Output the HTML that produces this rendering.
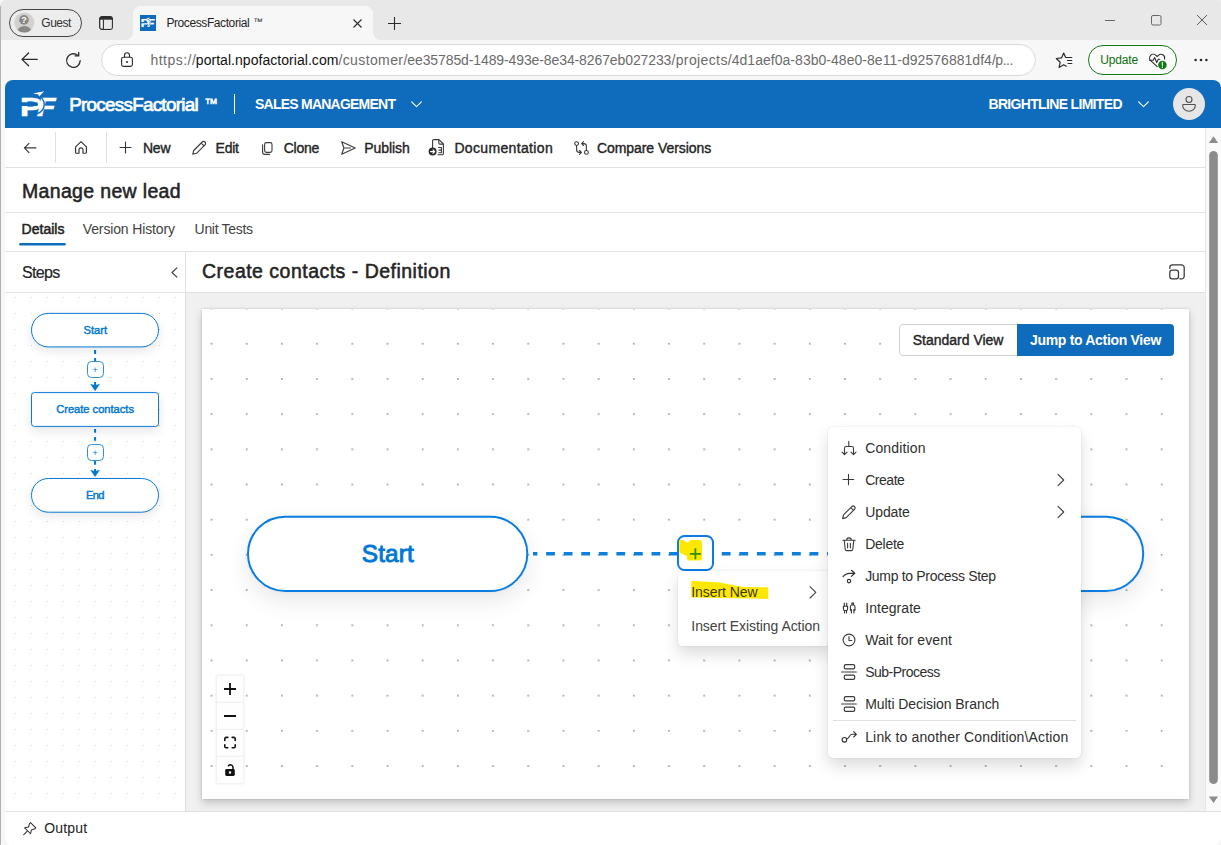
<!DOCTYPE html>
<html lang="en">
<head>
<meta charset="utf-8">
<title>ProcessFactorial ™</title>
<style>
html,body{margin:0;padding:0;}
body{width:1221px;height:845px;overflow:hidden;position:relative;background:#f7f7f7;font-family:"Liberation Sans",sans-serif;}
.a{position:absolute;box-sizing:border-box;}
.t{position:absolute;white-space:pre;line-height:1;font-family:"Liberation Sans",sans-serif;}
svg{position:absolute;overflow:visible;}
.ic{fill:none;stroke:#3a3a3a;stroke-width:1.100;stroke-linecap:round;stroke-linejoin:round;}
.hl{background:#e0e0e0;}
</style>
</head>
<body>
<!-- ===== window chrome ===== -->
<div class="a" id="titlebar" style="left:0;top:0;width:1221px;height:40px;background:#e8e8e8;border-radius:6px 2px 0 0;"></div>
<div class="a" id="wborder" style="left:0;top:6px;width:1px;height:839px;background:#b2b2b2;"></div>
<!-- guest pill -->
<div class="a" style="left:9px;top:9px;width:73px;height:28px;border:1px solid #444;border-radius:14px;background:#ececec;"></div>
<svg style="left:14px;top:12px" width="21" height="21" viewBox="0 0 21 21"><defs><clipPath id="gc"><circle cx="10.3" cy="10.600" r="10"/></clipPath></defs><circle cx="10.3" cy="10.600" r="10" fill="#d3d1cf"/><g clip-path="url(#gc)"><ellipse cx="10.3" cy="20.600" rx="7.600" ry="6.600" fill="#8a8886"/></g><circle cx="10" cy="7.900" r="4.800" fill="#8a8886"/></svg>
<span class="t" style="left:21.300px;top:15.600px;font-size:9px;font-weight:700;color:#fff;">?</span>
<!-- vertical tabs icon -->
<svg style="left:99px;top:16px" width="14" height="14" viewBox="0 0 14 14"><rect x=".7" y=".7" width="12.600" height="12.600" rx="2.300" fill="#f4f4f4" stroke="#2e2e2e" stroke-width="1.300"/><path d="M.7 3.400V3A2.300 2.300 0 0 1 3 .7h8A2.300 2.300 0 0 1 13.300 3v.4z" fill="#2e2e2e" stroke="#2e2e2e" stroke-width=".6"/><path d="M4.400 3.400v9.800" stroke="#2e2e2e" stroke-width="1.100"/><rect x="5" y="3.900" width="7.600" height="8.700" fill="#e8e8e8"/></svg>
<!-- active tab -->
<div class="a" style="left:133px;top:6px;width:240px;height:34px;background:#f7f7f7;border-radius:8px 8px 0 0;"></div>
<svg style="left:125px;top:32px" width="8" height="8" viewBox="0 0 8 8"><path d="M8 0v8H0a8 8 0 0 0 8-8z" fill="#f7f7f7"/></svg>
<svg style="left:373px;top:32px" width="8" height="8" viewBox="0 0 8 8"><path d="M0 0v8h8a8 8 0 0 1-8-8z" fill="#f7f7f7"/></svg>
<!-- favicon -->
<div class="a" style="left:140px;top:15px;width:16px;height:16px;background:#0f6cbd;"></div>
<div class="a" style="left:0;top:0;width:70px;height:125px;transform-origin:0 0;transform:translate(132.900px,-17.800px) scale(.388);">
<span class="t" style="left:20.200px;top:93.900px;font-size:26px;font-weight:700;color:#fff;transform-origin:0 0;transform:scaleX(1.26);-webkit-text-stroke:.6px #fff;">P</span>
<span class="t" style="left:36.800px;top:93.900px;font-size:26px;font-weight:700;font-style:italic;color:#fff;transform-origin:0 0;transform:scaleX(1.16);-webkit-text-stroke:.6px #fff;">F</span>
<svg style="left:0;top:0" width="70" height="125"><path d="M20 102.300h16.200a1.850 1.850 0 0 1 0 3.700H20z" fill="#0f6cbd"/><path d="M40.300 96.500c3.600 2.600 4.800 7.500 3.300 11.400-1.200 3-3.600 4.600-6.400 5.800" fill="none" stroke="#0f6cbd" stroke-width="1.400"/><path d="M33 93.500L44.100 91.300 39.200 96.400 38.400 94.500z" fill="#fff"/></svg>
</div>
<!-- tab close, new tab -->
<svg style="left:352.5px;top:19.1px" width="9" height="9" viewBox="0 0 9 9"><path d="M.5.5l8 8M8.5.5l-8 8" stroke="#2b2b2b" stroke-width="1.1" fill="none"/></svg>
<svg style="left:387.5px;top:16.5px" width="13" height="13" viewBox="0 0 13 13"><path d="M6.5 0v13M0 6.5h13" stroke="#2b2b2b" stroke-width="1.1" fill="none"/></svg>
<!-- window controls -->
<svg style="left:1104px;top:19.5px" width="11" height="1" viewBox="0 0 11 1"><path d="M1 .5h10" stroke="#666" stroke-width="1"/></svg>
<svg style="left:1151px;top:15px" width="11" height="11" viewBox="0 0 11 11"><rect x=".5" y=".5" width="9.500" height="9.500" rx="1.500" fill="none" stroke="#666" stroke-width="1"/></svg>
<svg style="left:1197px;top:15px" width="10" height="10" viewBox="0 0 10 10"><path d="M0 0l10 10M10 0L0 10" stroke="#5a5a5a" stroke-width="1" fill="none"/></svg>
<!-- toolbar row -->
<svg style="left:21px;top:52px" width="17" height="15" viewBox="0 0 17 15"><path d="M7.6 1L1 7.4l6.6 6.4M1.2 7.4h15" fill="none" stroke="#2b2b2b" stroke-width="1.3" stroke-linecap="round" stroke-linejoin="round"/></svg>
<svg style="left:64.5px;top:51.5px" width="17" height="17" viewBox="0 0 17 17"><path d="M15.2 8.6A6.8 6.8 0 1 1 12.6 3.2" fill="none" stroke="#2b2b2b" stroke-width="1.3" stroke-linecap="round"/><path d="M10.2 3.9h3.5V.5" fill="none" stroke="#2b2b2b" stroke-width="1.3" stroke-linecap="round" stroke-linejoin="round"/></svg>
<div class="a" style="left:101px;top:44px;width:934.500px;height:32px;border-radius:16px;background:#fff;border:1px solid #dadada;"></div>
<svg style="left:121px;top:52px" width="12" height="15" viewBox="0 0 12 15"><rect x=".6" y="5.3" width="10.8" height="9.1" rx="1.8" fill="none" stroke="#2b2b2b" stroke-width="1.1"/><path d="M3.500 5.300V3.300a2.500 2.500 0 0 1 5 0v2" fill="none" stroke="#2b2b2b" stroke-width="1.100"/><circle cx="6" cy="9.9" r="1" fill="#2b2b2b"/></svg>
<!-- favorites -->
<svg style="left:0;top:0" width="1221" height="80"><g fill="none" stroke="#2b2b2b" stroke-width="1.200" stroke-linecap="round" stroke-linejoin="round"><path d="M1065.500 57.300L1063.700 53l-2.200 4.900-5.200.6 3.900 3.700-1.100 5.200 4.600-2.700 2.600 1.500"/><path d="M1066.200 57.500h5.600M1067.400 60.500h4.400M1068 63.500h3.800"/></g></svg>
<!-- update pill -->
<div class="a" style="left:1087.5px;top:45px;width:89.5px;height:30px;border:1px solid #107c10;border-radius:15px;background:#fbfbfb;"></div>
<svg style="left:1149px;top:52.5px" width="18" height="16" viewBox="0 0 18 16"><path d="M8.2 13.6L1.700 7.600A3.700 3.700 0 0 1 7 2.300l1.200 1.200 1.200-1.200A3.700 3.700 0 0 1 15.500 6" fill="none" stroke="#2b2b2b" stroke-width="1.1" stroke-linecap="round" stroke-linejoin="round"/><path d="M.5 7.200h3.800l1.400-2.600 2 5 1.500-3.400h1.600" fill="none" stroke="#2b2b2b" stroke-width="1.1" stroke-linecap="round" stroke-linejoin="round"/><circle cx="13.400" cy="12" r="4.300" fill="#107c10"/><path d="M13.400 9.500v2.800" stroke="#fff" stroke-width="1.300" stroke-linecap="round"/><circle cx="13.400" cy="14.200" r=".75" fill="#fff"/></svg>
<svg style="left:1194px;top:58px" width="14" height="4" viewBox="0 0 14 4"><circle cx="1.600" cy="2" r="1.300" fill="#2b2b2b"/><circle cx="7" cy="2" r="1.300" fill="#2b2b2b"/><circle cx="12.400" cy="2" r="1.300" fill="#2b2b2b"/></svg>

<!-- ===== page ===== -->
<div class="a" id="page" style="left:5px;top:80px;width:1216px;height:766px;background:#fff;border-radius:8px 8px 9px 9px;overflow:hidden;">
  <div class="a" style="left:0;top:0;width:1216px;height:48px;background:#0f6cbd;"></div>
</div>
<!-- logo -->
<span class="t" id="lgP" style="left:20.200px;top:93.900px;font-size:26px;font-weight:700;color:#fff;transform-origin:0 0;transform:scaleX(1.26);-webkit-text-stroke:.6px #fff;">P</span>
<span class="t" id="lgF" style="left:36.800px;top:93.900px;font-size:26px;font-weight:700;font-style:italic;color:#fff;transform-origin:0 0;transform:scaleX(1.16);-webkit-text-stroke:.6px #fff;">F</span>
<svg style="left:0;top:0" width="70" height="125"><path d="M20 102.300h16.200a1.850 1.850 0 0 1 0 3.700H20z" fill="#0f6cbd"/><path d="M40.300 96.500c3.600 2.600 4.800 7.500 3.300 11.400-1.200 3-3.600 4.600-6.400 5.800" fill="none" stroke="#0f6cbd" stroke-width="1.400"/><path d="M33 93.500L44.100 91.300 39.200 96.400 38.400 94.500z" fill="#fff"/></svg>
<div class="a" style="left:234px;top:94px;width:1px;height:20px;background:#fff;"></div>
<svg style="left:411px;top:101px" width="11" height="7" viewBox="0 0 11 7"><path d="M.6.800l4.900 4.900L10.400.800" fill="none" stroke="#fff" stroke-width="1.100" stroke-linecap="round" stroke-linejoin="round"/></svg>
<svg style="left:1137.500px;top:101px" width="11" height="7" viewBox="0 0 11 7"><path d="M.6.800l4.900 4.900L10.400.800" fill="none" stroke="#fff" stroke-width="1.100" stroke-linecap="round" stroke-linejoin="round"/></svg>
<div class="a" style="left:1173px;top:88px;width:32px;height:32px;border-radius:16px;background:#e6e6e6;"></div>
<svg style="left:0;top:0" width="1221" height="128"><g fill="none" stroke="#505050" stroke-width="1.100"><circle cx="1189" cy="99.500" r="3"/><path d="M1183.300 104.500h11.400a.6.600 0 0 1 .6.600v.5a6.300 5.600 0 0 1-12.600 0v-.5a.6.600 0 0 1 .6-.6z"/></g></svg>

<!-- command bar -->
<div class="a" style="left:5px;top:167px;width:1200px;height:1px;background:#e0e0e0;"></div>
<div class="a" style="left:55px;top:132px;width:1px;height:31px;background:#e0e0e0;"></div>
<div class="a" style="left:106px;top:132px;width:1px;height:31px;background:#e0e0e0;"></div>
<svg class="ic" style="left:0;top:0" width="60" height="170"><path d="M29 143.300l-4.600 4.600 4.600 4.700M24.700 147.900h11.200" stroke-width="1.150"/></svg>
<svg class="ic" style="left:75px;top:140.900px" width="12" height="13" viewBox="0 0 12 13"><path d="M.6 5.800L6 .7l5.400 5.100v5.600a.8.800 0 0 1-.8.800H8V8.800a2 2 0 0 0-4 0v3.400H1.400a.8.800 0 0 1-.8-.8z" stroke="#333" stroke-width="1.150"/></svg>
<svg class="ic" style="left:0;top:0" width="140" height="170"><path d="M125.500 142v11M120 147.500h11" stroke="#333"/></svg>
<svg class="ic" style="left:191.500px;top:141px" width="15" height="14" viewBox="0 0 15 14"><path d="M.8 13.200l.9-3.700L10.200 1a1.900 1.900 0 0 1 2.800 2.800L4.500 12.300zM9.200 2l2.800 2.800"/></svg>
<svg class="ic" style="left:261.500px;top:141.500px" width="11" height="13" viewBox="0 0 11 13"><rect x="2.600" y=".6" width="7.400" height="9.800" rx="1.800"/><path d="M.6 2.800v7.400a2.200 2.200 0 0 0 2.200 2.200h4.700"/></svg>
<svg class="ic" style="left:341px;top:141px" width="15" height="14" viewBox="0 0 15 14"><path d="M.7.800l13.500 6.200L.7 13.200 2.900 7zM2.900 7h6.600"/></svg>
<svg class="ic" style="left:428px;top:139px" width="17" height="17" viewBox="0 0 17 17"><path d="M4.600 9V1.900a1.300 1.300 0 0 1 1.300-1.300h5l4.500 4.400v9.400a1.300 1.300 0 0 1-1.300 1.300H10"/><path d="M10.800.700v3.300a1.100 1.100 0 0 0 1.100 1.100h3.300"/><path d="M10.500 8.500h2.900v5.200h-2.600M11 11.100h2.200"/><circle cx="4.600" cy="12.600" r="4" fill="#2b2b2b" stroke="none"/><path d="M2.500 12.600h4M5 10.900l1.700 1.700L5 14.300" stroke="#fff"/></svg>
<svg class="ic" style="left:574px;top:141px" width="15" height="14" viewBox="0 0 15 14"><circle cx="2.600" cy="2.600" r="1.900"/><circle cx="12.400" cy="11.400" r="1.900"/><path d="M2.600 4.500v4.300a2.600 2.600 0 0 0 2.600 2.600h2M5.500 9.500l1.900 1.900-1.900 1.900M12.400 9.500V5.200a2.600 2.600 0 0 0-2.600-2.600h-2M9.500.7L7.600 2.600l1.900 1.900"/></svg>

<!-- title + tabs -->
<div class="a" style="left:5px;top:212px;width:1200px;height:1px;background:#e0e0e0;"></div>
<svg style="left:0;top:0" width="100" height="250"><rect x="19.200" y="242.900" width="46.600" height="2.600" rx="1.300" fill="#0f6cbd"/></svg>
<div class="a" style="left:5px;top:251px;width:1200px;height:1px;background:#e0e0e0;"></div>

<!-- steps panel -->
<svg style="left:5px;top:293px" width="180" height="510"><defs><pattern id="sd" x="10" y="4" width="16" height="16" patternUnits="userSpaceOnUse"><circle cx="0.500" cy="0.500" r=".55" fill="#d0d0d6"/></pattern></defs><rect width="180" height="510" fill="url(#sd)"/></svg>
<div class="a" style="left:185px;top:252px;width:1px;height:559px;background:#e0e0e0;"></div>
<div class="a" style="left:5px;top:292px;width:1200px;height:1px;background:#e0e0e0;"></div>
<svg class="ic" style="left:170.500px;top:267px" width="7" height="11" viewBox="0 0 7 11"><path d="M5.900.8L1 5.500l4.900 4.700"/></svg>
<!-- steps nodes -->
<svg style="left:0;top:0" width="190" height="520" viewBox="0 0 190 520"><g fill="none" stroke="#0078d4" stroke-width="2"><path d="M95.100 350.100V386.500" stroke-dasharray="3.800 4.200"/><path d="M95.100 428.900V473" stroke-dasharray="3.900 4.100"/></g><path d="M90.700 384.200q4.400 2.300 8.800 0L95.100 390.700z" fill="#0078d4" stroke="#0078d4" stroke-width=".5" stroke-linejoin="round"/><path d="M90.700 470.200q4.400 2.300 8.800 0L95.100 476.500z" fill="#0078d4" stroke="#0078d4" stroke-width=".5" stroke-linejoin="round"/></svg>
<div class="a" style="left:31px;top:313px;width:128px;height:34.4px;border-radius:17px;background:#fff;box-shadow:0 0 1.600px rgba(0,0,0,.06),0 4px 11px rgba(0,0,0,.1);"></div>
<div class="a" style="left:31px;top:392px;width:128px;height:35.4px;border-radius:3px;background:#fff;box-shadow:0 0 1.600px rgba(0,0,0,.06),0 4px 11px rgba(0,0,0,.1);"></div>
<div class="a" style="left:31px;top:478px;width:128px;height:34.4px;border-radius:17px;background:#fff;box-shadow:0 0 1.600px rgba(0,0,0,.06),0 4px 11px rgba(0,0,0,.1);"></div>
<svg style="left:0;top:0" width="190" height="520"><g fill="none" stroke="#0a7adb" stroke-width="1"><rect x="31.500" y="313.400" width="127" height="33.500" rx="16.750"/><rect x="31.500" y="392.600" width="127" height="33.800" rx="2.800"/><rect x="31.500" y="478.500" width="127" height="33.700" rx="16.850"/></g></svg>
<div class="a" style="left:86.500px;top:361px;width:17.300px;height:17px;border:1px solid #2b8fe0;border-radius:4.500px;background:#fff;"></div>
<div class="a" style="left:86.500px;top:444px;width:17.300px;height:17px;border:1px solid #2b8fe0;border-radius:4.500px;background:#fff;"></div>
<span class="t" style="left:92.300px;top:364.800px;font-size:9.500px;color:#0078d4;">+</span>
<span class="t" style="left:92.300px;top:447.900px;font-size:9.500px;color:#0078d4;">+</span>

<!-- main area -->
<div class="a" style="left:186px;top:293px;width:1019px;height:518px;background:#f0f0f0;"></div>
<div class="a" id="canvas" style="left:202px;top:309px;width:987px;height:490px;background:#fff;box-shadow:0 0 2px rgba(0,0,0,.16),0 4px 8px rgba(0,0,0,.19);overflow:hidden;">
  <svg style="left:0;top:0" width="987" height="490"><defs><pattern id="md" x="8.650" y="-1.400" width="35.190" height="35.190" patternUnits="userSpaceOnUse"><circle cx=".9" cy=".9" r=".9" fill="#8e8e98"/></pattern></defs><rect width="987" height="490" fill="url(#md)"/></svg>
</div>
<svg class="ic" style="left:0;top:0" width="1221" height="290"><g stroke="#3a3a3a" stroke-width="1.250"><path d="M1169.800 268.400v-.9a2.700 2.700 0 0 1 2.700-2.700h9a2.700 2.700 0 0 1 2.700 2.700v8.700a2.700 2.700 0 0 1-2.700 2.700h-1.700"/><rect x="1169.800" y="270.200" width="8.700" height="8.700" rx="2.300"/></g></svg>

<!-- edge + nodes in canvas -->
<svg style="left:0;top:0" width="1221" height="845"><path d="M533 553.800H864" stroke="#0f7fdc" stroke-width="3.600" stroke-dasharray="8.780 8.780" stroke-dashoffset="4.400" fill="none"/></svg>
<div class="a" style="left:247px;top:515.700px;width:281.300px;height:76.300px;border-radius:38.150px;background:#fff;box-shadow:0 0 3.500px rgba(0,0,0,.06),0 9px 24px rgba(0,0,0,.095);"></div>
<div class="a" style="left:862.900px;top:515.700px;width:281.300px;height:76.300px;border-radius:38.150px;background:#fff;box-shadow:0 0 3.500px rgba(0,0,0,.06),0 9px 24px rgba(0,0,0,.095);"></div>
<svg style="left:0;top:0" width="1221" height="845"><rect x="248" y="516.700" width="279.300" height="74.300" rx="37.150" fill="none" stroke="#0b7de0" stroke-width="2"/><rect x="863.900" y="516.700" width="279.300" height="74.300" rx="37.150" fill="none" stroke="#0b7de0" stroke-width="2"/></svg>
<div class="a" style="left:677px;top:535px;width:37px;height:35.700px;border:2px solid #0b7de0;border-radius:7.500px;background:#fff;"></div>
<svg style="left:0;top:0" width="1221" height="845"><path d="M679.300 541q0-.9.900-.9l2.800 0 4.800 2.700q1.300-2.600 3.800-2.700l8.200 0q2.200 0 2.200 2.800v15q0 2.700-2.600 2.700h-9.600q-2.900 0-2.900-2.600l-.1-1.900-7.500-3.700z" fill="#ffe800"/><path d="M695.400 548.300v11M689.900 553.800h11" stroke="#2f8f00" stroke-width="1.800" fill="none"/></svg>

<!-- view buttons -->
<div class="a" style="left:899px;top:324px;width:119px;height:32px;border:1px solid #d1d1d1;border-radius:4px 0 0 4px;background:#fff;"></div>
<div class="a" style="left:1017px;top:324px;width:157px;height:32px;border-radius:0 4px 4px 0;background:#0f6cbd;"></div>

<!-- controls -->
<div class="a" style="left:216.700px;top:675.500px;width:26.700px;height:107.800px;background:#fefefe;box-shadow:0 0 2.500px 1px rgba(0,0,0,.08);"></div>
<svg style="left:0;top:0" width="1221" height="845"><path d="M216.700 702.300h26.700M216.700 729.300h26.700M216.700 756.300h26.700" stroke="#eee" stroke-width="1"/><g stroke="#111" stroke-width="1.800" fill="none"><path d="M230 683v12M224 689h12M224 716h12"/><g stroke-width="1.600" stroke-linecap="round"><path d="M224.800 740.400v-1.700a1.300 1.300 0 0 1 1.300-1.300h1.700M232.200 737.400h1.700a1.300 1.300 0 0 1 1.300 1.300v1.700M235.200 744.800v1.700a1.300 1.300 0 0 1-1.300 1.300h-1.700M227.800 747.800h-1.700a1.300 1.300 0 0 1-1.300-1.300v-1.700"/></g></g><rect x="225.200" y="769" width="9.600" height="7" rx="1.400" fill="#111"/><path d="M233 769.200v-1.900a2.500 2.500 0 0 0-4.500-1.500" stroke="#111" stroke-width="1.500" fill="none" stroke-linecap="round"/><rect x="228.900" y="771.400" width="2.200" height="2.200" fill="#fff"/></svg>

<!-- menu 1 -->
<div class="a" style="left:678px;top:571px;width:152px;height:75.400px;background:#fff;border-radius:4px;box-shadow:0 0 2px rgba(0,0,0,.12),0 8px 16px rgba(0,0,0,.14);"></div>
<svg style="left:0;top:0" width="1221" height="845"><path d="M691.300 580.800l28 1.700 24 4.500 25 .3v11.600l-77-1.300z" fill="#ffe800"/><path d="M810 586.600l5.800 5.700-5.800 5.700" stroke="#424242" stroke-width="1.100" fill="none" stroke-linecap="round" stroke-linejoin="round"/></svg>

<!-- menu 2 -->
<div class="a" style="left:828px;top:427px;width:253px;height:330.500px;background:#fff;border-radius:5px;box-shadow:0 0 2px rgba(0,0,0,.12),0 8px 16px rgba(0,0,0,.14);"></div>
<div class="a" style="left:833px;top:720px;width:243px;height:1px;background:#e0e0e0;"></div>
<svg class="ic" style="left:0;top:0" width="1221" height="845">
 <!-- condition -->
 <g stroke="#3a3a3a" stroke-width="1.100"><path d="M848.800 441.300v5.200M844.500 454.400V448.300a1.800 1.800 0 0 1 1.800-1.800h5.400a1.800 1.800 0 0 1 1.800 1.800v6.100M842 452.200l2.500 2.400 2.500-2.400M851 452.200l2.500 2.400 2.500-2.400"/>
 <!-- create plus -->
 <path d="M848.500 474.200v10.600M843.100 479.500h10.700"/></g>
 <!-- update pencil -->
 <path d="M842.600 518.600l.9-3.700 8.300-8.300a1.900 1.900 0 0 1 2.700 2.700l-8.300 8.300zM850.800 507.600l2.700 2.700"/>
 <!-- delete -->
 <path d="M842.800 540.200h12.400M846.700 540.200a2.300 2.300 0 0 1 4.600 0M844.200 540.200l1 9a1.600 1.600 0 0 0 1.600 1.400h4.400a1.600 1.600 0 0 0 1.600-1.400l1-9M847.600 543.200v4.600M850.400 543.200v4.600"/>
 <!-- jump -->
 <g stroke="#333" stroke-width="1.150"><path d="M843.100 576.700q2.400-3.400 6.600-3.400h4.900M851.500 570.300l3.300 3-3.500 3.100"/><circle cx="849" cy="581.100" r="1.700"/></g>
 <!-- integrate -->
 <g stroke="#333" stroke-width="1.100"><path d="M844.300 603v3.200M846.700 603v3.200M843.400 606.200h4.200v2.300q0 2-1 2h-2.200q-1 0-1-2zM844.500 610.700v2.300M846.500 610.700v2.300"/><path d="M851.900 605v-1.900h1.600v1.900M850.400 610v-3q0-2 1.300-2h2q1.300 0 1.300 2v3M851.400 609.600v3.400M853.900 609.600v3.400M850.400 609.800q.2.800 1 .9M855 609.800q-.2.800-1 .9"/></g>
 <!-- clock -->
 <circle cx="849" cy="640" r="5.900"/><path d="M849 636.600v3.900h2.800"/>
 <!-- sub process -->
 <g stroke-width="1.200"><rect x="844.300" y="664.600" width="10.400" height="4.300" rx="1.400"/><path d="M841.700 672h14.600"/><rect x="844.300" y="675.100" width="10.400" height="4.300" rx="1.400"/>
 <rect x="844.300" y="696.600" width="10.400" height="4.300" rx="1.400"/><path d="M841.700 704h14.600"/><rect x="844.300" y="707.100" width="10.400" height="4.300" rx="1.400"/></g>
 <!-- link -->
 <g stroke="#333" stroke-width="1.100"><circle cx="844.400" cy="739.800" r="2.300"/><path d="M846.700 739c2.600-.6 2.400-4.700 5.400-4.700h4.100M853.700 731.600l2.700 2.700-2.700 2.700"/></g>
 <!-- chevrons -->
 <path d="M1058 474.300l5.700 5.700-5.700 5.700M1058 506.300l5.700 5.700-5.700 5.700"/>
</svg>

<!-- bottom bar -->
<div class="a" style="left:5px;top:811px;width:1216px;height:1px;background:#e0e0e0;"></div>
<svg class="ic" style="left:23px;top:822px" width="13" height="13" viewBox="0 0 13 13" stroke-width="1.150"><g transform="scale(1.040)"><path d="M7.200.6l5.100 5.100-.9.900-3.300 1-.8 3.700-5.700-5.700 3.700-.8 1-3.300zM4.500 8.400L.6 12.300" stroke="#333" stroke-width="1"/></g></svg>

<!-- scrollbar -->
<div class="a" style="left:1205px;top:128px;width:16px;height:683px;background:#fafafa;border-left:1px solid #e6e6e6;"></div>
<svg style="left:1206px;top:128px" width="15" height="683"><path d="M7.500 8.300l4.600 6.600h-9.200z" fill="#8b8b8b"/><path d="M7.500 675l4.600-6.600h-9.200z" fill="#8b8b8b"/><rect x="3.200" y="23" width="8.600" height="633" rx="4.300" fill="#8b8b8b"/></svg>

<span class="t" id="guest" style="left:41.30px;top:17.19px;font-size:12px;font-weight:400;color:#333;letter-spacing:-0.504px;">Guest</span>
<span class="t" id="tabt" style="left:166.40px;top:17.04px;font-size:12px;font-weight:400;color:#1f1f1f;letter-spacing:-0.405px;">ProcessFactorial </span>
<span class="t" id="tabtm" style="left:253.30px;top:17.16px;font-size:9.5px;font-weight:400;color:#1f1f1f;letter-spacing:0.000px;">™</span>
<span class="t" id="url1" style="left:150.40px;top:53.20px;font-size:14px;font-weight:400;color:#6b6b6b;letter-spacing:0.481px;">https://</span>
<span class="t" id="url2" style="left:195.80px;top:53.20px;font-size:14px;font-weight:400;color:#111;letter-spacing:0.044px;">portal.npofactorial.com</span>
<span class="t" id="url3a" style="left:338.40px;top:53.20px;font-size:14px;font-weight:400;color:#6b6b6b;letter-spacing:0.393px;">/customer/</span>
<span class="t" id="url3b" style="left:407.30px;top:53.20px;font-size:14px;font-weight:400;color:#6b6b6b;letter-spacing:-0.106px;">ee35785d-1489-493e-8e34-8267eb027233</span>
<span class="t" id="url3c" style="left:671.40px;top:53.20px;font-size:14px;font-weight:400;color:#6b6b6b;letter-spacing:0.387px;">/projects/</span>
<span class="t" id="url3d" style="left:731.70px;top:53.20px;font-size:14px;font-weight:400;color:#6b6b6b;letter-spacing:0.035px;">4d1aef0a-83b0-48e0-8e11-d92576881df4</span>
<span class="t" id="url3e" style="left:991.90px;top:53.20px;font-size:14px;font-weight:400;color:#6b6b6b;letter-spacing:-0.465px;">/p...</span>
<span class="t" id="upd" style="left:1100.30px;top:54.14px;font-size:12px;font-weight:400;color:#0e700e;letter-spacing:-0.181px;">Update</span>
<span class="t" id="brand" style="left:69.20px;top:96.14px;font-size:18.8px;font-weight:400;color:#fff;letter-spacing:-0.698px;-webkit-text-stroke:0.71px #fff;">ProcessFactorial </span>
<span class="t" id="brandtm" style="left:204.60px;top:97.02px;font-size:13.5px;font-weight:400;color:#fff;letter-spacing:0.000px;-webkit-text-stroke:0.51px #fff;">™</span>
<span class="t" id="sales" style="left:255.00px;top:97.15px;font-size:14px;font-weight:700;color:#fff;letter-spacing:-0.764px;">SALES MANAGEMENT</span>
<span class="t" id="bright" style="left:988.50px;top:97.15px;font-size:14px;font-weight:700;color:#fff;letter-spacing:-0.673px;">BRIGHTLINE LIMITED</span>
<span class="t" id="new" style="left:142.90px;top:141.20px;font-size:14px;font-weight:400;color:#242424;letter-spacing:-0.158px;-webkit-text-stroke:0.38px #242424;">New</span>
<span class="t" id="edit" style="left:215.60px;top:141.20px;font-size:14px;font-weight:400;color:#242424;letter-spacing:-0.242px;-webkit-text-stroke:0.38px #242424;">Edit</span>
<span class="t" id="clone" style="left:283.70px;top:141.20px;font-size:14px;font-weight:400;color:#242424;letter-spacing:-0.248px;-webkit-text-stroke:0.38px #242424;">Clone</span>
<span class="t" id="publish" style="left:364.30px;top:141.20px;font-size:14px;font-weight:400;color:#242424;letter-spacing:-0.087px;-webkit-text-stroke:0.38px #242424;">Publish</span>
<span class="t" id="docu" style="left:454.40px;top:141.20px;font-size:14px;font-weight:400;color:#242424;letter-spacing:0.344px;-webkit-text-stroke:0.38px #242424;">Documentation</span>
<span class="t" id="comp" style="left:596.90px;top:141.20px;font-size:14px;font-weight:400;color:#242424;letter-spacing:-0.058px;-webkit-text-stroke:0.38px #242424;">Compare Versions</span>
<span class="t" id="title" style="left:22.00px;top:182.04px;font-size:19.5px;font-weight:400;color:#242424;letter-spacing:0.332px;-webkit-text-stroke:0.53px #242424;">Manage new lead</span>
<span class="t" id="tab1" style="left:21.60px;top:222.05px;font-size:14px;font-weight:400;color:#242424;letter-spacing:0.001px;-webkit-text-stroke:0.53px #242424;">Details</span>
<span class="t" id="tab2" style="left:82.80px;top:222.05px;font-size:14px;font-weight:400;color:#424242;letter-spacing:-0.140px;">Version History</span>
<span class="t" id="tab3" style="left:194.60px;top:222.05px;font-size:14px;font-weight:400;color:#424242;letter-spacing:-0.313px;">Unit Tests</span>
<span class="t" id="steps" style="left:22.10px;top:265.21px;font-size:16px;font-weight:400;color:#242424;letter-spacing:-0.705px;-webkit-text-stroke:0.19px #242424;">Steps</span>
<span class="t" id="defn" style="left:202.00px;top:262.24px;font-size:19.5px;font-weight:400;color:#242424;letter-spacing:0.485px;-webkit-text-stroke:0.53px #242424;">Create contacts - Definition</span>
<span class="t" id="s_start" style="left:83.50px;top:325.17px;font-size:11.2px;font-weight:400;color:#0078d4;letter-spacing:-0.035px;-webkit-text-stroke:0.43px #0078d4;">Start</span>
<span class="t" id="s_cc" style="left:56.20px;top:404.07px;font-size:11.2px;font-weight:400;color:#0078d4;letter-spacing:-0.040px;-webkit-text-stroke:0.43px #0078d4;">Create contacts</span>
<span class="t" id="s_end" style="left:86.00px;top:490.02px;font-size:11.2px;font-weight:400;color:#0078d4;letter-spacing:-0.703px;-webkit-text-stroke:0.43px #0078d4;">End</span>
<span class="t" id="m_start" style="left:361.80px;top:542.05px;font-size:24.4px;font-weight:400;color:#0078d4;letter-spacing:0.121px;-webkit-text-stroke:0.93px #0078d4;">Start</span>
<span class="t" id="stdv" style="left:912.70px;top:333.15px;font-size:14px;font-weight:400;color:#242424;letter-spacing:-0.001px;-webkit-text-stroke:0.38px #242424;">Standard View</span>
<span class="t" id="jmpv" style="left:1030.00px;top:333.15px;font-size:14px;font-weight:700;color:#fff;letter-spacing:-0.311px;">Jump to Action View</span>
<span class="t" id="insn" style="left:691.30px;top:585.10px;font-size:14px;font-weight:400;color:#3a3a1a;letter-spacing:-0.080px;">Insert New</span>
<span class="t" id="inse" style="left:691.30px;top:619.05px;font-size:14px;font-weight:400;color:#424242;letter-spacing:-0.060px;">Insert Existing Action</span>
<span class="t" id="mi0" style="left:865.20px;top:441.10px;font-size:14px;font-weight:400;color:#2e2e2e;letter-spacing:0.143px;">Condition</span>
<span class="t" id="mi1" style="left:865.20px;top:473.10px;font-size:14px;font-weight:400;color:#2e2e2e;letter-spacing:-0.466px;">Create</span>
<span class="t" id="mi2" style="left:865.20px;top:505.10px;font-size:14px;font-weight:400;color:#2e2e2e;letter-spacing:-0.091px;">Update</span>
<span class="t" id="mi3" style="left:865.20px;top:537.10px;font-size:14px;font-weight:400;color:#2e2e2e;letter-spacing:-0.254px;">Delete</span>
<span class="t" id="mi4" style="left:865.20px;top:569.10px;font-size:14px;font-weight:400;color:#2e2e2e;letter-spacing:-0.319px;">Jump to Process Step</span>
<span class="t" id="mi5" style="left:865.20px;top:601.10px;font-size:14px;font-weight:400;color:#2e2e2e;letter-spacing:0.054px;">Integrate</span>
<span class="t" id="mi6" style="left:865.20px;top:633.10px;font-size:14px;font-weight:400;color:#2e2e2e;letter-spacing:0.065px;">Wait for event</span>
<span class="t" id="mi7" style="left:865.20px;top:665.10px;font-size:14px;font-weight:400;color:#2e2e2e;letter-spacing:-0.496px;">Sub-Process</span>
<span class="t" id="mi8" style="left:865.20px;top:697.10px;font-size:14px;font-weight:400;color:#2e2e2e;letter-spacing:-0.060px;">Multi Decision Branch</span>
<span class="t" id="mi9" style="left:865.20px;top:730.15px;font-size:14px;font-weight:400;color:#2e2e2e;letter-spacing:0.146px;">Link to another Condition\Action</span>
<span class="t" id="outp" style="left:44.20px;top:821.20px;font-size:14px;font-weight:400;color:#242424;letter-spacing:0.194px;">Output</span>
</body>
</html>
